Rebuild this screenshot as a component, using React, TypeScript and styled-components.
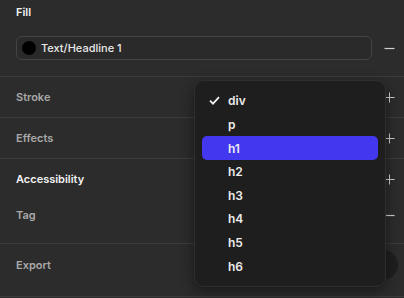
import React from "react";
import styled, { createGlobalStyle } from "styled-components";

const Global = createGlobalStyle`
  html, body { margin: 0; padding: 0; background: #2c2c2c; }
  body { font-family: Inter, "Noto Sans", sans-serif; -webkit-font-smoothing: antialiased; }
  * { box-sizing: border-box; }
`;

const Panel = styled.div`
  position: relative;
  width: 404px;
  height: 298px;
  background: #2c2c2c;
  overflow: hidden;
`;

const Section = styled.div<{ $h: number; $border?: boolean }>`
  height: ${(p) => p.$h}px;
  border-bottom: ${(p) => (p.$border === false ? "none" : "1px solid #3b3b3b")};
  padding: 0 8px 0 16px;
  display: flex;
  flex-direction: column;
`;

const Row = styled.div<{ $h: number }>`
  height: ${(p) => p.$h}px;
  display: flex;
  align-items: center;
  justify-content: space-between;
`;

const Title = styled.span<{ $strong?: boolean }>`
  font-size: 11px;
  font-weight: 600;
  color: ${(p) => (p.$strong ? "#f2f2f2" : "#a9a9a9")};
`;

const InputRow = styled.div`
  display: flex;
  align-items: center;
  gap: 10px;
  margin-top: 12px;
`;

const Input = styled.div`
  flex: 1;
  height: 24px;
  border: 1px solid #444;
  border-radius: 6px;
  display: flex;
  align-items: center;
  gap: 5px;
  padding: 0 5px;
  background: #2a2a2a;
`;

const Swatch = styled.span`
  width: 14px;
  height: 14px;
  border-radius: 50%;
  background: #000;
`;

const InputText = styled.span`
  font-size: 11px;
  color: #e8e8e8;
  font-weight: 500;
`;

const IconBtn = styled.span`
  width: 14px;
  height: 14px;
  display: flex;
  align-items: center;
  justify-content: center;
  color: #d0d0d0;
`;

const RoundBtn = styled.span`
  width: 30px;
  height: 30px;
  border-radius: 50%;
  background: #1f1f1f;
  margin-right: -2px;
`;

const Menu = styled.div`
  position: absolute;
  left: 194px;
  top: 80px;
  width: 192px;
  height: 207px;
  background: #1e1e1e;
  border: 1px solid #2f2f2f;
  border-radius: 10px;
  box-shadow: 0 4px 14px rgba(0, 0, 0, 0.45);
  padding: 8px 7px;
  display: flex;
  flex-direction: column;
`;

const Item = styled.div<{ $active?: boolean }>`
  height: 24px;
  border-radius: 5px;
  background: ${(p) => (p.$active ? "#4338f0" : "transparent")};
  display: flex;
  align-items: center;
  padding-left: 26px;
  position: relative;
  font-size: 12px;
  font-weight: 600;
  color: #ececec;
`;

const Check = styled.span`
  position: absolute;
  left: 7px;
  top: 7px;
  display: flex;
`;

const Plus = () => (
  <IconBtn>
    <svg width="11" height="11" viewBox="0 0 11 11">
      <path d="M5.5 0.5v10M0.5 5.5h10" stroke="currentColor" strokeWidth="1" />
    </svg>
  </IconBtn>
);

const Minus = () => (
  <IconBtn>
    <svg width="11" height="11" viewBox="0 0 11 11">
      <path d="M0.5 5.5h10" stroke="currentColor" strokeWidth="1.2" />
    </svg>
  </IconBtn>
);

const items = ["div", "p", "h1", "h2", "h3", "h4", "h5", "h6"];

export default function App() {
  return (
    <Panel>
      <Global />
      <Section $h={77}>
        <Row $h={24}>
          <Title $strong>Fill</Title>
        </Row>
        <InputRow>
          <Input>
            <Swatch />
            <InputText>Text/Headline 1</InputText>
          </Input>
          <Minus />
        </InputRow>
      </Section>
      <Section $h={41}>
        <Row $h={40}>
          <Title>Stroke</Title>
          <Plus />
        </Row>
      </Section>
      <Section $h={41}>
        <Row $h={40}>
          <Title>Effects</Title>
          <Plus />
        </Row>
      </Section>
      <Section $h={85}>
        <Row $h={40}>
          <Title $strong>Accessibility</Title>
          <Plus />
        </Row>
        <Row $h={32}>
          <Title>Tag</Title>
          <Minus />
        </Row>
      </Section>
      <Section $h={53}>
        <Row $h={42}>
          <Title>Export</Title>
          <RoundBtn />
        </Row>
      </Section>
      <Menu>
        {items.map((it) => (
          <Item key={it} $active={it === "h1"}>
            {it === "div" && (
              <Check>
                <svg width="11" height="9" viewBox="0 0 11 9">
                  <path d="M1 4.6l3 3L10 1.2" stroke="#f0f0f0" strokeWidth="1.8" fill="none" />
                </svg>
              </Check>
            )}
            {it}
          </Item>
        ))}
      </Menu>
    </Panel>
  );
}
